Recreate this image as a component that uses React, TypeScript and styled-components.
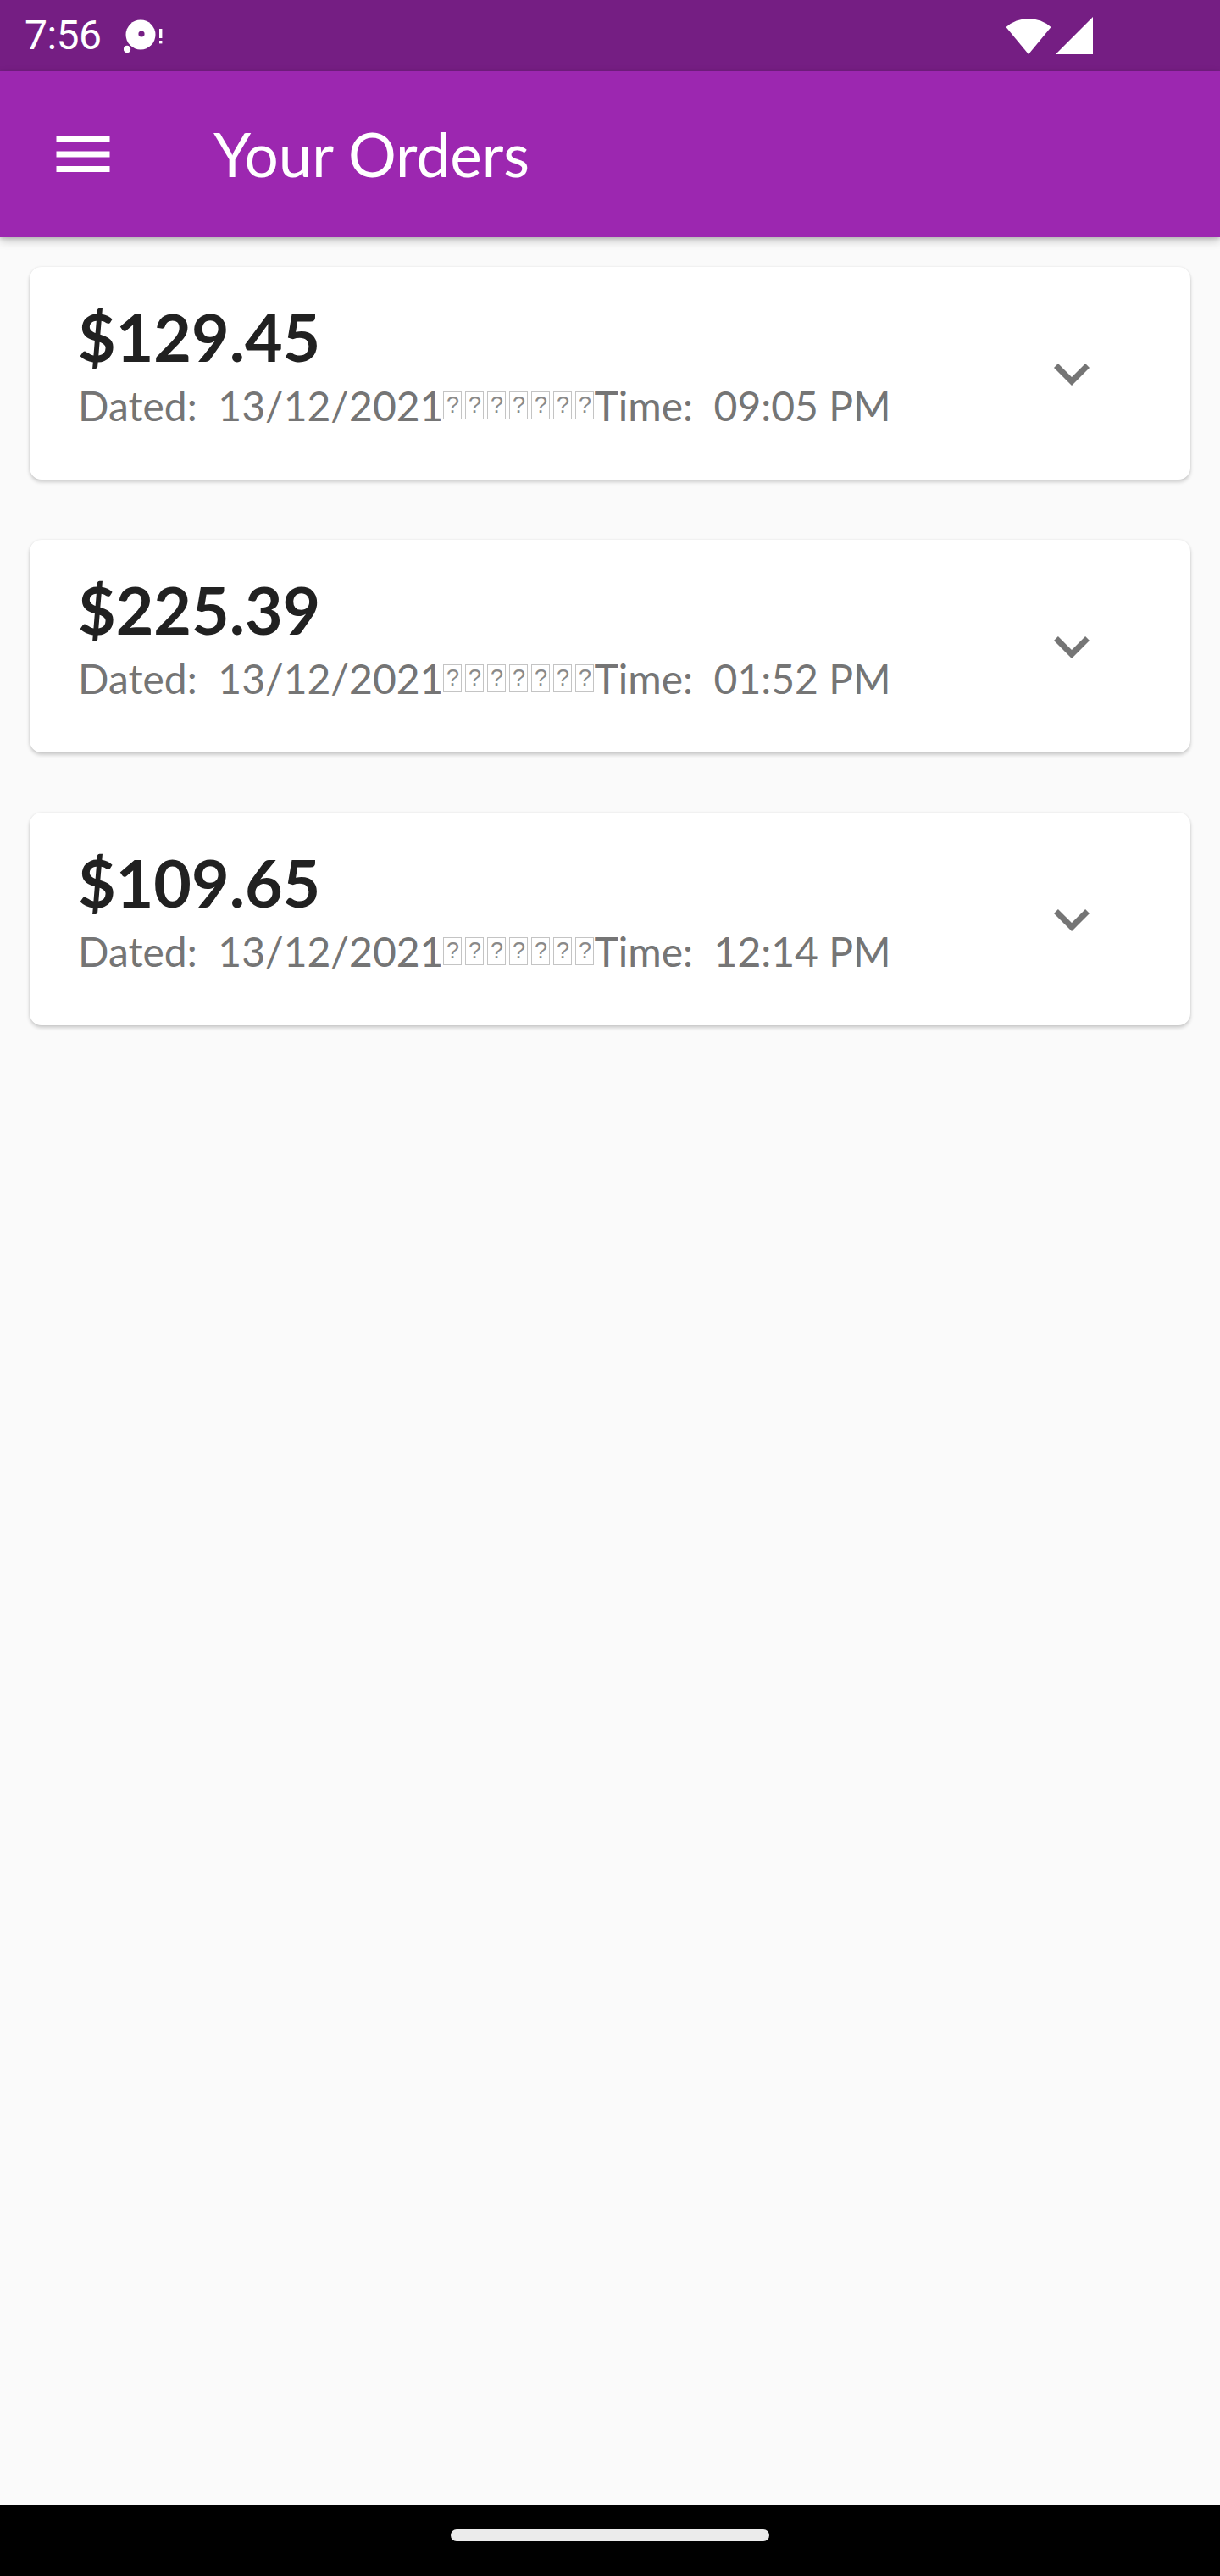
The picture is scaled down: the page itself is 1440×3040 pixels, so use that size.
import React from 'react';
import styled, { createGlobalStyle } from 'styled-components';

const GlobalStyle = createGlobalStyle`
  html, body {
    margin: 0;
    padding: 0;
    background: #fafafa;
  }
  * { box-sizing: border-box; }
`;

const Screen = styled.div`
  width: 1440px;
  height: 3040px;
  display: flex;
  flex-direction: column;
  background: #fafafa;
  font-family: Lato, "Noto Sans", sans-serif;
  overflow: hidden;
`;

const StatusBar = styled.div`
  height: 84px;
  flex-shrink: 0;
  background: #751e83;
  display: flex;
  align-items: center;
  padding: 0 150px 0 29px;
  color: #fff;
  font-family: Roboto, "Noto Sans", sans-serif;
`;

const Clock = styled.span`
  font-size: 48px;
  line-height: 84px;
  letter-spacing: -0.5px;
`;

const StatusLeft = styled.div`
  display: flex;
  align-items: center;
  gap: 26px;
  flex: 1;
`;

const StatusRight = styled.div`
  display: flex;
  align-items: center;
  gap: 5px;
`;

const AppBar = styled.header`
  height: 196px;
  flex-shrink: 0;
  background: #9c27b0;
  display: flex;
  align-items: center;
  padding-left: 56px;
  position: relative;
  z-index: 2;
  box-shadow: 0 4px 10px rgba(0, 0, 0, 0.22), 0 2px 4px rgba(0, 0, 0, 0.12);
`;

const MenuButton = styled.div`
  width: 84px;
  height: 84px;
  margin-right: 112px;
  display: flex;
  align-items: center;
  justify-content: center;
`;

const Title = styled.h1`
  margin: 0;
  color: #fff;
  font-family: Lato, sans-serif;
  font-weight: 400;
  font-size: 71px;
  line-height: 84px;
`;

const Content = styled.main`
  flex: 1;
  display: flex;
  flex-direction: column;
  gap: 71px;
  padding: 35px 35px 0;
`;

const Card = styled.section`
  height: 251px;
  display: flex;
  background: #fff;
  border-radius: 14px;
  padding: 0 56px 0 57px;
  box-shadow: 0 3px 4px rgba(0, 0, 0, 0.18), 0 0 3px rgba(0, 0, 0, 0.08);
`;

const Info = styled.div`
  flex: 1;
  display: flex;
  flex-direction: column;
  padding-top: 36px;
`;

const Price = styled.div`
  font-family: Lato, sans-serif;
  font-weight: 700;
  font-size: 77px;
  line-height: 92px;
  color: #212121;
`;

const DateLine = styled.div`
  margin-top: 6px;
  font-family: Lato, sans-serif;
  font-size: 48px;
  line-height: 59px;
  color: #757575;
  white-space: pre;
`;

const Tofu = styled.span`
  display: inline-block;
  overflow: hidden;
  width: 22px;
  height: 33px;
  margin-right: 4px;
  vertical-align: 2px;
  border: 1.5px solid #c4c4c4;
  text-align: center;
  font-family: "Liberation Sans", sans-serif;
  font-size: 27px;
  line-height: 30px;
  color: #8a8a8a;
  &:last-of-type { margin-right: 0; }
`;

const ExpandButton = styled.div`
  width: 168px;
  align-self: center;
  display: flex;
  justify-content: center;
`;

const NavBar = styled.div`
  height: 84px;
  flex-shrink: 0;
  background: #000;
  display: flex;
  align-items: center;
  justify-content: center;
  padding-bottom: 12px;
`;

const HomePill = styled.div`
  width: 376px;
  height: 14px;
  border-radius: 7px;
  background: #ebebeb;
`;

const orders = [
  { total: '$129.45', date: '13/12/2021', time: '09:05 PM' },
  { total: '$225.39', date: '13/12/2021', time: '01:52 PM' },
  { total: '$109.65', date: '13/12/2021', time: '12:14 PM' },
];

const ExpandIcon = () => (
  <svg width="84" height="84" viewBox="0 0 24 24">
    <path fill="#757575" d="M16.59 8.59L12 13.17 7.41 8.59 6 10l6 6 6-6z" />
  </svg>
);

const MenuIcon = () => (
  <svg width="84" height="84" viewBox="0 0 24 24">
    <path fill="#fff" d="M3 18h18v-2H3v2zm0-5h18v-2H3v2zm0-7v2h18V6H3z" />
  </svg>
);

const SyncAlert = () => (
  <svg width="48" height="40" viewBox="0 0 48 40">
    <circle cx="20" cy="19" r="17.5" fill="#fff" />
    <circle cx="21" cy="18" r="3.6" fill="#751e83" />
    <circle cx="4" cy="36" r="4.2" fill="#fff" />
    <rect x="42" y="12" width="3.4" height="11" fill="#fff" />
    <rect x="42" y="26" width="3.4" height="3.4" fill="#fff" />
  </svg>
);

const Wifi = () => (
  <svg width="54" height="46" viewBox="0 0 54 46">
    <path fill="#fff" d="M27 45 L0.5 13 A40 40 0 0 1 53.5 13 Z" />
  </svg>
);

const Signal = () => (
  <svg width="44" height="44" viewBox="0 0 44 44">
    <path fill="#fff" d="M0 44 L44 44 L44 0 Z" />
  </svg>
);

const App: React.FC = () => {
  return (
    <Screen>
      <GlobalStyle />
      <StatusBar>
        <StatusLeft>
          <Clock>7:56</Clock>
          <SyncAlert />
        </StatusLeft>
        <StatusRight>
          <Wifi />
          <Signal />
        </StatusRight>
      </StatusBar>
      <AppBar>
        <MenuButton>
          <MenuIcon />
        </MenuButton>
        <Title>Your Orders</Title>
      </AppBar>
      <Content>
        {orders.map((order, i) => (
          <Card key={i}>
            <Info>
              <Price>{order.total}</Price>
              <DateLine>
                {'Dated:  ' + order.date}
                {Array.from({ length: 7 }).map((_, j) => (
                  <Tofu key={j}>?</Tofu>
                ))}
                {'Time:  ' + order.time}
              </DateLine>
            </Info>
            <ExpandButton>
              <ExpandIcon />
            </ExpandButton>
          </Card>
        ))}
      </Content>
      <NavBar>
        <HomePill />
      </NavBar>
    </Screen>
  );
};

export default App;
